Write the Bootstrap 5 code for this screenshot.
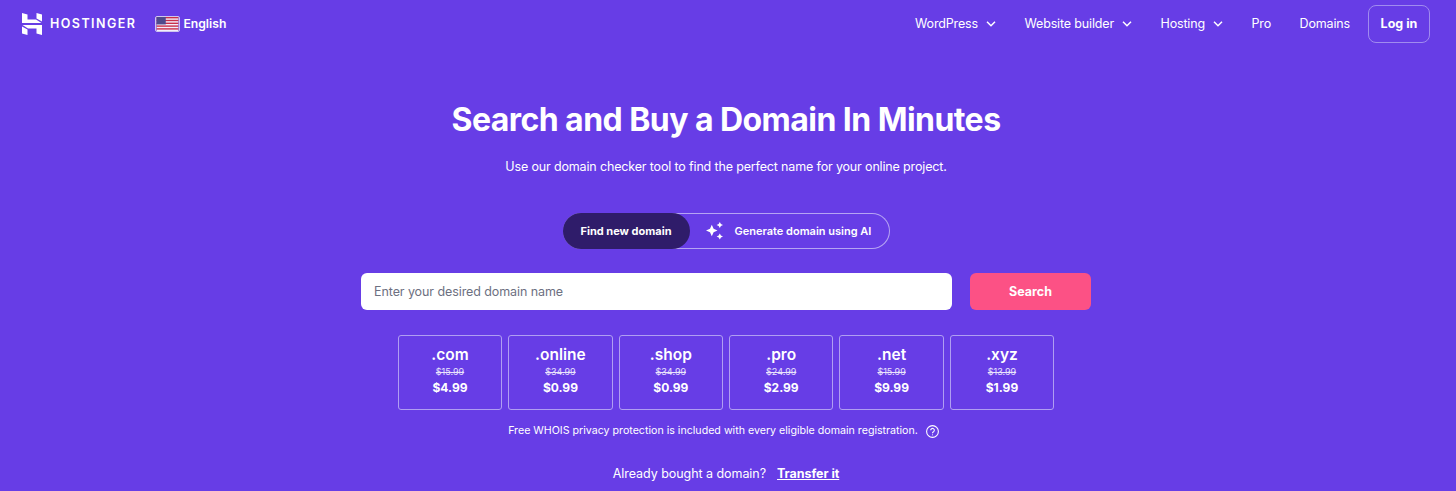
<!DOCTYPE html>
<html lang="en">
<head>
  <meta charset="UTF-8">
  <meta name="viewport" content="width=device-width, initial-scale=1.0">
  <title>Hostinger Domain Checker</title>
  <link href="https://cdn.jsdelivr.net/npm/bootstrap@5.3.0/dist/css/bootstrap.min.css" rel="stylesheet">
  <style>
    body {
      background-color: #673de6;
      color: #fff;
      font-family: "Inter", "Liberation Sans", sans-serif;
      overflow: hidden;
    }
    .top-bar {
      height: 48px;
      padding: 0 26px 0 22px;
    }
    .brand-name {
      font-size: 12.5px;
      font-weight: 600;
      letter-spacing: 1.45px;
      margin-left: 8px;
      color: #fff;
    }
    .lang-pick {
      margin-left: 19px;
      font-size: 12.2px;
      font-weight: 600;
      gap: 3px;
    }
    .flag-box {
      display: block;
      border: 1px solid #cfc6ee;
      border-radius: 2px;
    }
    .menu-link {
      color: #fff;
      font-size: 12.5px;
      letter-spacing: -0.15px;
      text-decoration: none;
      display: flex;
      align-items: center;
      gap: 8px;
    }
    .menu-row {
      gap: 28.5px;
    }
    .login-btn {
      color: #fff;
      font-size: 12.5px;
      font-weight: 700;
      width: 62px;
      height: 38px;
      padding: 0;
      border: 1px solid #a08bef;
      border-radius: 8px;
      margin-left: -10.5px;
    }
    .hero-wrap {
      padding-right: 4px;
    }
    .hero-title {
      font-size: 32px;
      line-height: 40px;
      font-weight: 700;
      letter-spacing: -0.55px;
      margin: 52px 0 0;
    }
    .hero-sub {
      font-size: 12.5px;
      letter-spacing: -0.15px;
      line-height: 20px;
      margin: 17px 0 0;
    }
    .mode-switch {
      width: 327px;
      height: 36px;
      margin-top: 36px;
      border: 1px solid #b6a4f3;
      border-left: 0;
      border-radius: 18px;
    }
    .mode-on {
      width: 127px;
      background-color: #2f1c6a;
      border-radius: 18px;
      font-size: 11px;
      font-weight: 700;
      margin: -1px 0;
    }
    .mode-off {
      font-size: 11px;
      font-weight: 600;
      padding-left: 15px;
      gap: 10px;
    }
    .search-row {
      width: 730px;
      margin-top: 24px;
      gap: 18px;
    }
    .domain-input {
      height: 37px;
      font-size: 12.5px;
      letter-spacing: -0.08px;
      border: 0;
      border-radius: 6px;
      padding: 0 13px;
      color: #1d1e20;
    }
    .domain-input::placeholder {
      color: #6d7081;
      opacity: 1;
    }
    .search-btn {
      width: 121px;
      height: 37px;
      flex: none;
      padding: 1px 0 0;
      background-color: #fc5185;
      border: 0;
      border-radius: 6px;
      color: #fff;
      font-size: 12.5px;
      font-weight: 700;
    }
    .tld-row {
      margin-top: 25px;
      gap: 6px;
    }
    .tld-tile {
      width: 104.4px;
      height: 75px;
      border: 1px solid #b09ef2;
      border-radius: 3px;
      padding-top: 10px;
      line-height: 1;
    }
    .tld-name {
      font-size: 15.5px;
      font-weight: 600;
      line-height: 18px;
    }
    .tld-old {
      font-size: 9px;
      line-height: 12px;
      margin-top: 2px;
      text-decoration: line-through;
      color: #e9e3fc;
    }
    .tld-new {
      font-size: 12px;
      font-weight: 700;
      line-height: 16px;
      margin-top: 2px;
    }
    .whois-line {
      font-size: 10.65px;
      line-height: 16px;
      margin-top: 13px;
      margin-right: 5px;
      gap: 8px;
    }
    .transfer-line {
      font-size: 12.5px;
      letter-spacing: -0.05px;
      line-height: 20px;
      margin-top: 25px;
      gap: 11px;
    }
    .transfer-line a {
      color: #fff;
      font-weight: 700;
    }
  </style>
</head>
<body>

  <nav class="top-bar d-flex align-items-center justify-content-between">
    <div class="d-flex align-items-center">
      <a href="#" class="d-flex align-items-center text-decoration-none">
        <svg width="20" height="22" viewBox="0 0 20 22" fill="#fff">
          <path d="M0 0l5.500 1.500v5h8.500L19.500 10H0z"/>
          <path d="M20 22l-5.500-1.500v-5H6L.5 12H20z"/>
          <path d="M14.500 0L20 1.500V8.500L14.500 5.500z"/>
          <path d="M0 13.500L5.500 16.500V22L0 20.500z"/>
        </svg>
        <span class="brand-name">HOSTINGER</span>
      </a>
      <div class="lang-pick d-flex align-items-center">
        <svg class="flag-box" width="25" height="16" viewBox="0 0 25 16">
          <rect width="25" height="16" fill="#f3eefc"/>
          <rect y="0" width="25" height="1.600" fill="#c9304a"/>
          <rect y="3.200" width="25" height="1.600" fill="#c9304a"/>
          <rect y="6.400" width="25" height="1.600" fill="#c9304a"/>
          <rect y="9.600" width="25" height="1.600" fill="#c9304a"/>
          <rect y="12.800" width="25" height="1.600" fill="#c9304a"/>
          <rect width="10.500" height="8.500" fill="#4f4a8c"/>
        </svg>
        <span>English</span>
      </div>
    </div>
    <div class="menu-row d-flex align-items-center">
      <a href="#" class="menu-link">WordPress
        <svg width="10" height="6" viewBox="0 0 10 6" fill="none" stroke="#fff" stroke-width="1.500"><path d="M1 .8l4 4 4-4"/></svg>
      </a>
      <a href="#" class="menu-link">Website builder
        <svg width="10" height="6" viewBox="0 0 10 6" fill="none" stroke="#fff" stroke-width="1.500"><path d="M1 .8l4 4 4-4"/></svg>
      </a>
      <a href="#" class="menu-link">Hosting
        <svg width="10" height="6" viewBox="0 0 10 6" fill="none" stroke="#fff" stroke-width="1.500"><path d="M1 .8l4 4 4-4"/></svg>
      </a>
      <a href="#" class="menu-link">Pro</a>
      <a href="#" class="menu-link">Domains</a>
      <button class="btn login-btn">Log in</button>
    </div>
  </nav>

  <main class="hero-wrap d-flex flex-column align-items-center text-center">
    <h1 class="hero-title">Search and Buy a Domain In Minutes</h1>
    <p class="hero-sub">Use our domain checker tool to find the perfect name for your online project.</p>

    <div class="mode-switch d-flex">
      <div class="mode-on d-flex align-items-center justify-content-center">Find new domain</div>
      <div class="mode-off d-flex align-items-center">
        <svg width="20" height="20" viewBox="0 0 20 20" fill="#fff">
          <path d="M6.800 3.800l1.800 3.900 3.900 1.800-3.900 1.800-1.800 3.900L5 11.300 1 9.500l4-1.800z"/>
          <path d="M14.800 1l1.100 2 2.100 1-2.100 1.100-1.100 2-1.100-2-2.100-1.100 2.100-1z"/>
          <path d="M14.800 12.500l1.100 2 2.100 1-2.100 1.100-1.100 2-1.100-2-2.100-1.100 2.100-1z"/>
        </svg>
        <span>Generate domain using AI</span>
      </div>
    </div>

    <div class="search-row d-flex">
      <input type="text" class="form-control domain-input" placeholder="Enter your desired domain name">
      <button class="btn search-btn">Search</button>
    </div>

    <div class="tld-row d-flex">
      <div class="tld-tile"><div class="tld-name">.com</div><div class="tld-old">$15.99</div><div class="tld-new">$4.99</div></div>
      <div class="tld-tile"><div class="tld-name">.online</div><div class="tld-old">$34.99</div><div class="tld-new">$0.99</div></div>
      <div class="tld-tile"><div class="tld-name">.shop</div><div class="tld-old">$34.99</div><div class="tld-new">$0.99</div></div>
      <div class="tld-tile"><div class="tld-name">.pro</div><div class="tld-old">$24.99</div><div class="tld-new">$2.99</div></div>
      <div class="tld-tile"><div class="tld-name">.net</div><div class="tld-old">$15.99</div><div class="tld-new">$9.99</div></div>
      <div class="tld-tile"><div class="tld-name">.xyz</div><div class="tld-old">$13.99</div><div class="tld-new">$1.99</div></div>
    </div>

    <div class="whois-line d-flex align-items-center">
      <span>Free WHOIS privacy protection is included with every eligible domain registration.</span>
      <svg width="13" height="13" viewBox="0 0 13 13" fill="none" stroke="#fff" stroke-width="1.100">
        <circle cx="6.500" cy="6.500" r="5.900"/>
        <path d="M4.700 5.200a1.800 1.800 0 1 1 2.800 1.500c-.7.400-1 .8-1 1.500"/>
        <path d="M6.500 9.400v.9"/>
      </svg>
    </div>

    <div class="transfer-line d-flex">
      <span>Already bought a domain?</span>
      <a href="#">Transfer it</a>
    </div>
  </main>

</body>
</html>
